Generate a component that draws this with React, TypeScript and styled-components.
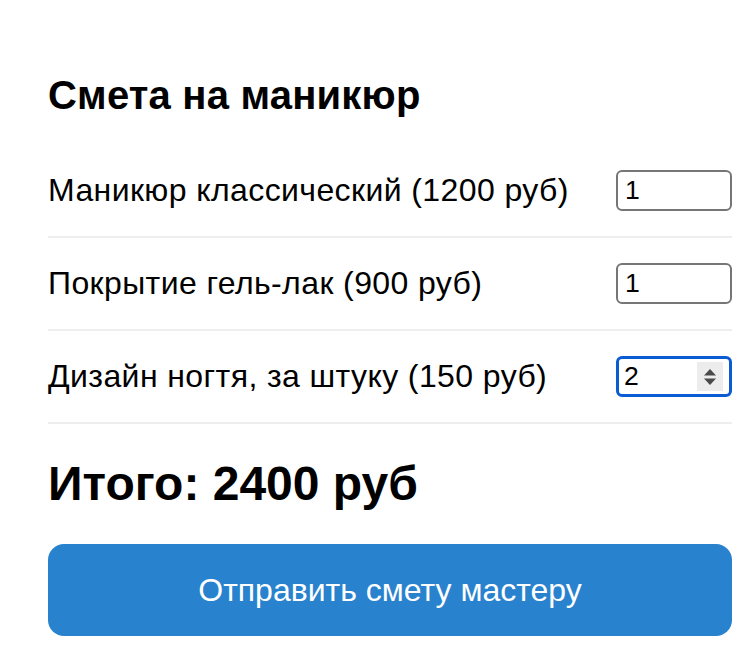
import React, { useState } from "react";
import styled, { createGlobalStyle } from "styled-components";

const Global = createGlobalStyle`
  html, body { margin: 0; padding: 0; background: #fff; }
  body { font-family: "Liberation Sans", Arial, Helvetica, sans-serif; color: #000; }
  * { box-sizing: border-box; }
`;

const Page = styled.div`
  padding: 72px 16px 0 48px;
`;

const Title = styled.h2`
  margin: 0 0 27px;
  font-size: 40px;
  line-height: 46px;
  font-weight: 700;
  letter-spacing: 0.2px;
`;

const Row = styled.div`
  display: flex;
  align-items: center;
  justify-content: space-between;
  padding: 25px 0;
  border-bottom: 2px solid #eeeeee;
`;

const Label = styled.span`
  font-size: 32px;
  line-height: 41px;
  letter-spacing: 0.4px;
`;

const Field = styled.div<{ $focused?: boolean }>`
  width: 116px;
  height: 41px;
  display: flex;
  align-items: center;
  border: ${(p) => (p.$focused ? "3px solid #0b5bd3" : "2px solid #767676")};
  border-radius: 6px;
  padding: ${(p) => (p.$focused ? "0 6px 0 5px" : "0 6px 0 7px")};
  background: #fff;
`;

const NumInput = styled.input`
  flex: 1;
  min-width: 0;
  border: none;
  outline: none;
  padding: 0;
  background: transparent;
  font-family: "Liberation Sans", Arial, sans-serif;
  font-size: 26.6px;
  color: #000;
`;

const Spinner = styled.span`
  width: 26px;
  height: 29px;
  background: #ececec;
  display: flex;
  align-items: center;
  justify-content: center;
`;

const Total = styled.div`
  margin: 32px 0 33px;
  font-size: 48px;
  line-height: 55px;
  font-weight: 700;
`;

const SendButton = styled.button`
  width: 100%;
  height: 92px;
  border: none;
  border-radius: 16px;
  background: #2882ce;
  color: #fff;
  font-family: "Liberation Sans", Arial, sans-serif;
  font-size: 32px;
  cursor: pointer;
`;

const items = [
  { name: "Маникюр классический (1200 руб)", price: 1200, qty: 1 },
  { name: "Покрытие гель-лак (900 руб)", price: 900, qty: 1 },
  { name: "Дизайн ногтя, за штуку (150 руб)", price: 150, qty: 2 },
];

export default function App() {
  const [qty, setQty] = useState(items.map((i) => i.qty));
  const total = items.reduce((s, it, i) => s + it.price * qty[i], 0);
  return (
    <>
      <Global />
      <Page>
        <Title>Смета на маникюр</Title>
        {items.map((it, i) => (
          <Row key={it.name}>
            <Label>{it.name}</Label>
            <Field $focused={i === 2}>
              <NumInput
                value={String(qty[i])}
                onChange={(e) => {
                  const n = [...qty];
                  n[i] = Number(e.target.value) || 0;
                  setQty(n);
                }}
              />
              {i === 2 && (
                <Spinner>
                  <svg width="14" height="18" viewBox="0 0 14 18">
                    <path d="M7 1 L13 7.5 H1 Z" fill="#4a4a4a" />
                    <path d="M7 17 L13 10.5 H1 Z" fill="#4a4a4a" />
                  </svg>
                </Spinner>
              )}
            </Field>
          </Row>
        ))}
        <Total>Итого: {total} руб</Total>
        <SendButton>Отправить смету мастеру</SendButton>
      </Page>
    </>
  );
}
